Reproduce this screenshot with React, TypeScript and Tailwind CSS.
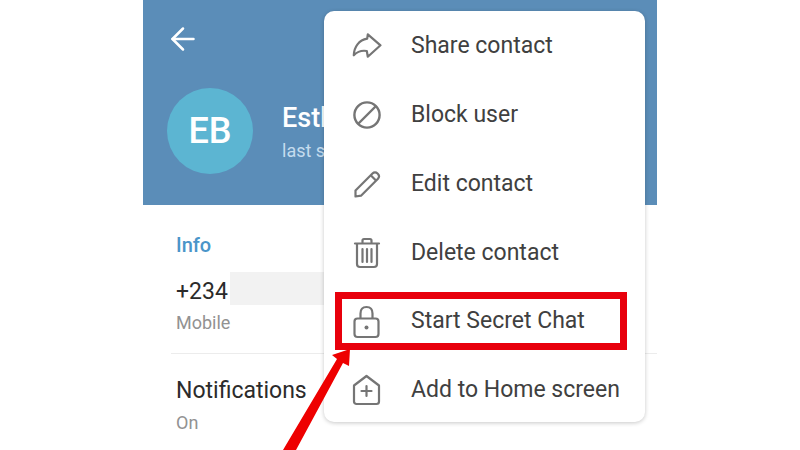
import { ArrowLeft } from "lucide-react";

const font = "font-['Roboto',sans-serif]";

function ShareIcon() {
  return (
    <svg width="32" height="28" viewBox="0 0 32 28" fill="none" stroke="#757575" strokeWidth="2.2" strokeLinejoin="round" strokeLinecap="round">
      <path d="M16.8 2.3 L29.5 13.3 L16.8 24.7 L15.8 19 C10 18 6 20 2.8 23.3 C3 15 8 8 16.2 6.7 Z" />
    </svg>
  );
}

function BlockIcon() {
  return (
    <svg width="30" height="30" viewBox="0 0 30 30" fill="none" stroke="#757575" strokeWidth="2.4">
      <circle cx="15" cy="15" r="12.6" />
      <path d="M6 24 L24 6" />
    </svg>
  );
}

function PencilIcon() {
  return (
    <svg width="30" height="30" viewBox="0 0 30 30" fill="none" stroke="#757575" strokeWidth="2.2" strokeLinejoin="round">
      <path d="M3.5 21.5 L20.5 4.5 C22 3 24 3 25.5 4.5 L26 5 C27.5 6.5 27.5 8.2 26 9.7 L9 26.7 L3.5 27.5 Z" />
      <path d="M19 6.5 L24 11.5" />
    </svg>
  );
}

function TrashIcon() {
  return (
    <svg width="30" height="32" viewBox="0 0 30 32" fill="none" stroke="#757575" strokeWidth="2.2" strokeLinecap="round" strokeLinejoin="round">
      <path d="M3 6.5 H27" />
      <path d="M10.5 5.5 V3.5 C10.5 2.5 11 2 12 2 H18 C19 2 19.5 2.5 19.5 3.5 V5.5" />
      <path d="M5 7 V27 C5 29 6 30 8 30 H22 C24 30 25 29 25 27 V7" />
      <path d="M10.5 12 V25 M15 12 V25 M19.5 12 V25" />
    </svg>
  );
}

function LockIcon() {
  return (
    <svg width="30" height="34" viewBox="0 0 30 34" fill="none" stroke="#757575" strokeWidth="2.2" strokeLinejoin="round">
      <rect x="2.5" y="13.5" width="24" height="18.5" rx="3" />
      <path d="M8.5 13.5 V8.5 C8.5 4.5 10.8 2 14.5 2 C18.2 2 20.5 4.5 20.5 8.5 V13.5" />
      <circle cx="14.5" cy="22.5" r="2" fill="#757575" stroke="none" />
    </svg>
  );
}

function HomeAddIcon() {
  return (
    <svg width="30" height="32" viewBox="0 0 30 32" fill="none" stroke="#757575" strokeWidth="2.2" strokeLinejoin="round" strokeLinecap="round">
      <path d="M2 11.5 L14.5 2 L27 11.5 V27.5 C27 29 26 30 24.5 30 H4.5 C3 30 2 29 2 27.5 Z" />
      <path d="M14.5 12 V22 M9.5 17 H19.5" />
    </svg>
  );
}

const items = [
  { label: "Share contact", icon: <ShareIcon /> },
  { label: "Block user", icon: <BlockIcon /> },
  { label: "Edit contact", icon: <PencilIcon /> },
  { label: "Delete contact", icon: <TrashIcon /> },
  { label: "Start Secret Chat", icon: <LockIcon /> },
  { label: "Add to Home screen", icon: <HomeAddIcon /> },
];

export default function App() {
  return (
    <div className={`${font} relative flex h-[450px] w-[800px] justify-center overflow-hidden bg-white`}>
      <div className="relative h-full w-[514px] overflow-hidden bg-white">
        <header className="flex h-[205px] flex-col bg-[#5b8db8] pl-6 pt-[21px] text-white">
          <ArrowLeft size={36} strokeWidth={1.7} className="ml-[-2px] mb-[31px]" />
          <div className="flex items-center gap-[29px]">
            <div className="flex h-[86px] w-[86px] items-center justify-center rounded-full bg-[#5cb5d2] text-[36px] font-medium">
              EB
            </div>
            <div className="whitespace-nowrap pt-[2px]">
              <div className="text-[27px] font-medium leading-[36px]">Esther B</div>
              <div className="mt-[1px] text-[18px] leading-[28px] text-[#c5dcee]">last seen recently</div>
            </div>
          </div>
        </header>

        <section className="pl-[33px] pt-[26px]">
          <div className="text-[20px] font-medium leading-[28px] text-[#4a95c9]">Info</div>
          <div className="mt-[13px] flex items-start">
            <span className="mt-[3px] text-[23px] leading-[33px] text-[#2b2b2b]">+234</span>
            <span className="ml-[2px] h-[33px] w-[98px] bg-[#f2f2f2]" />
          </div>
          <div className="text-[18px] leading-[30px] text-[#929292]">Mobile</div>
        </section>
        <div className="ml-[28px] mt-[15px] h-px bg-[#ececec]" />
        <section className="pl-[33px] pt-[20px]">
          <div className="text-[23px] leading-[33px] text-[#2b2b2b]">Notifications</div>
          <div className="mt-[1px] text-[18px] leading-[30px] text-[#929292]">On</div>
        </section>

        <div className="absolute left-[181px] top-[11px] h-[411px] w-[321px] rounded-[10px] bg-white pt-[1px] shadow-[0_1px_4px_rgba(0,0,0,0.22)]">
          {items.map((item) => (
            <div key={item.label} className="flex h-[68.8px] items-center text-[#404040]">
              <span className="mr-[2px] flex w-[85px] justify-center">{item.icon}</span>
              <span className="whitespace-nowrap text-[23px]">{item.label}</span>
            </div>
          ))}
        </div>

        <div className="absolute left-[192px] top-[292px] h-[58px] w-[292px] border-[7px] border-[#e8000c]" />
      </div>

      <svg className="absolute left-0 top-0" width="800" height="450" viewBox="0 0 800 450">
        <path d="M283 450 L337 359 L332 355 L350 349 L349 366 L343 363 L296 450 Z" fill="#ee0000" />
      </svg>
    </div>
  );
}
